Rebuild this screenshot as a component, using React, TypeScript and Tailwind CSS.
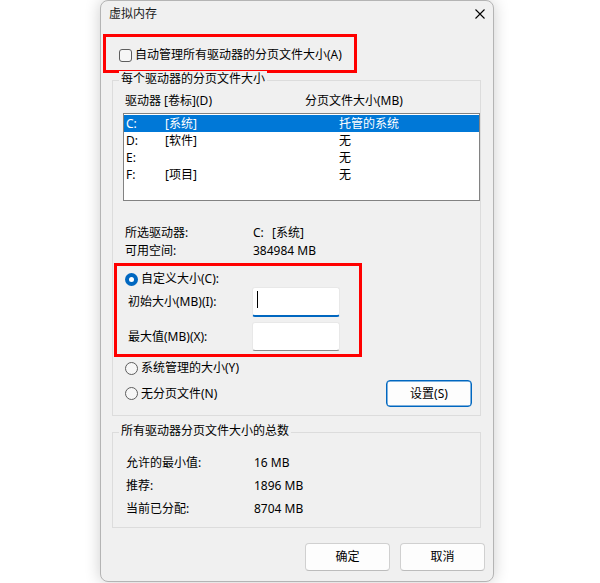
import React from 'react';
import clsx from 'clsx';

const Radio = ({ checked }: { checked?: boolean }) =>
  checked ? (
    <span className="flex h-[13px] w-[13px] shrink-0 items-center justify-center rounded-full bg-[#0067c0]">
      <span className="h-[5px] w-[5px] rounded-full bg-white" />
    </span>
  ) : (
    <span className="h-[13px] w-[13px] shrink-0 rounded-full border border-[#5d5d5d] bg-[#f6f6f6]" />
  );

const Btn = ({ children, primary, className }: { children: React.ReactNode; primary?: boolean; className?: string }) => (
  <button
    className={clsx(
      'flex items-center justify-center rounded-[4px] bg-[#fdfdfd] text-black',
      primary ? 'border border-[#0067c0] shadow-[inset_0_0_0_0.5px_#0067c0]' : 'border border-[#d0d0d0] border-b-[#bcbcbc]',
      className
    )}
  >
    {children}
  </button>
);

const Group = ({ title, className, children }: { title: string; className?: string; children: React.ReactNode }) => (
  <div className={clsx('relative ml-[11px] mr-[12px] border border-[#dcdcdc]', className)}>
    <span className="absolute -top-[10px] left-[6px] bg-[#f0f0f0] px-[2px] leading-[16px]">{title}</span>
    {children}
  </div>
);

const drives = [
  { d: 'C:', label: '[系统]', size: '托管的系统', sel: true },
  { d: 'D:', label: '[软件]', size: '无' },
  { d: 'E:', label: '', size: '无' },
  { d: 'F:', label: '[项目]', size: '无' },
];

const totals = [
  ['允许的最小值:', '16 MB'],
  ['推荐:', '1896 MB'],
  ['当前已分配:', '8704 MB'],
];

export default function App() {
  return (
    <div className="h-[583px] w-[600px] overflow-hidden bg-white font-['Noto_Sans','Noto_Sans_CJK_SC',sans-serif] text-[12px] leading-[16px] text-black">
      <div className="ml-[100px] h-[582px] w-[394px] rounded-lg border border-[#b4b4b4] bg-[#f0f0f0] shadow-[0_0_16px_rgba(0,0,0,0.2)]">
        {/* title bar */}
        <div className="flex h-[25px] items-center justify-between pl-[8px] pr-[8px]">
          <span className="text-[#1a1a1a]">虚拟内存</span>
          <svg width="10" height="10" viewBox="0 0 10 10" className="text-black">
            <path d="M0.5 0.5 L9.5 9.5 M9.5 0.5 L0.5 9.5" stroke="currentColor" strokeWidth="1.1" />
          </svg>
        </div>

        {/* auto manage */}
        <div className="ml-[2px] mt-[8px] flex h-[39px] w-[254px] items-center gap-[3px] border-[3px] border-[#ff0000] pl-[13px] pt-[3px]">
          <span className="h-[13px] w-[13px] rounded-[3px] border border-[#5d5d5d] bg-[#f6f6f6]" />
          <span>自动管理所有驱动器的分页文件大小(A)</span>
        </div>

        {/* per-drive */}
        <Group title="每个驱动器的分页文件大小" className="mt-[7px] h-[336px]">
          <div className="flex pl-[12px] pt-[12px]">
            <span className="w-[180px]">驱动器 [卷标](D)</span>
            <span>分页文件大小(MB)</span>
          </div>
          <div className="ml-[10px] mt-[4px] h-[88px] border border-[#828282] bg-white pt-[1px]">
            {drives.map((r) => (
              <div
                key={r.d}
                className={clsx('flex h-[17px] pl-[2px] leading-[17px]', r.sel && 'bg-[#0078d7] text-white')}
              >
                <span className="w-[39px]">{r.d}</span>
                <span className="w-[174px]">{r.label}</span>
                <span>{r.size}</span>
              </div>
            ))}
          </div>

          <div className="mt-[23px] pl-[12px] leading-[18px]">
            <div className="flex">
              <span className="w-[128px]">所选驱动器:</span>
              <span className="w-[19px]">C:</span>
              <span>[系统]</span>
            </div>
            <div className="flex">
              <span className="w-[128px]">可用空间:</span>
              <span>384984 MB</span>
            </div>
          </div>

          {/* custom size */}
          <div className="ml-[1px] mt-[3px] h-[94px] w-[248px] border-[3px] border-[#ff0000]">
            <div className="flex items-center gap-[3px] pl-[8px] pt-[5px]">
              <Radio checked />
              <span>自定义大小(C):</span>
            </div>
            <div className="flex items-center pl-[11px]">
              <span className="w-[124px]">初始大小(MB)(I):</span>
              <div className="relative h-[30px] w-[88px] rounded-[3px] border border-[#e8e8e8] border-b-2 border-b-[#0067c0] bg-white">
                <div className="absolute left-[4px] top-[3px] h-[17px] w-px bg-black" />
              </div>
            </div>
            <div className="mt-[5px] flex items-center pl-[11px]">
              <span className="w-[124px]">最大值(MB)(X):</span>
              <div className="h-[29px] w-[88px] rounded-[3px] border border-[#e8e8e8] border-b-[#8a8a8a] bg-white" />
            </div>
          </div>

          <div className="mt-[3px] flex items-center gap-[3px] pl-[12px]">
            <Radio />
            <span>系统管理的大小(Y)</span>
          </div>
          <div className="mt-[4px] flex items-center justify-between pl-[12px] pr-[8px]">
            <div className="flex items-center gap-[3px]">
              <Radio />
              <span>无分页文件(N)</span>
            </div>
            <Btn primary className="h-[27px] w-[86px]">
              设置(S)
            </Btn>
          </div>
        </Group>

        {/* totals */}
        <Group title="所有驱动器分页文件大小的总数" className="mt-[16px] h-[96px]">
          <div className="pl-[13px] pt-[18px] leading-[23px]">
            {totals.map(([k, v]) => (
              <div key={k} className="flex">
                <span className="w-[128px]">{k}</span>
                <span>{v}</span>
              </div>
            ))}
          </div>
        </Group>

        <div className="mt-[15px] flex justify-end gap-[10px] pr-[8px]">
          <Btn className="h-[28px] w-[85px]">确定</Btn>
          <Btn className="h-[28px] w-[85px]">取消</Btn>
        </div>
      </div>
    </div>
  );
}
